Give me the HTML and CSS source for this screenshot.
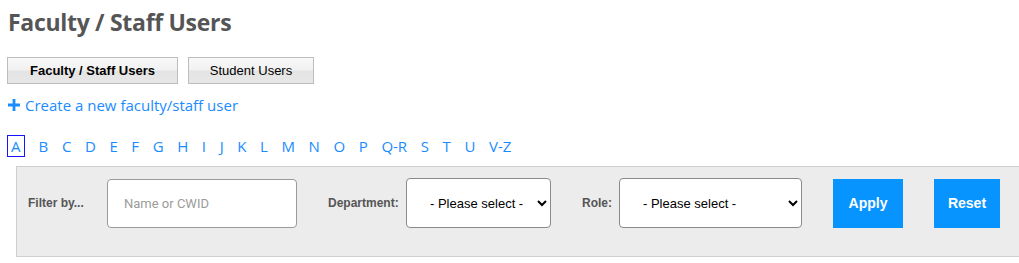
FILE: index.html
```html
<!DOCTYPE html>
<html lang="en">
<head>
<meta charset="utf-8">
<title>Faculty / Staff Users</title>
<link rel="stylesheet" href="styles.css">
</head>
<body>
<div class="page">
  <h1 class="title">Faculty / Staff Users</h1>
  <div class="tabs">
    <button class="tab tab-active" type="button">Faculty / Staff Users</button>
    <button class="tab" type="button">Student Users</button>
  </div>
  <a class="create-link" href="#"><svg class="plus" viewBox="0 0 12 12" width="12" height="12" aria-hidden="true"><path d="M4.6 0h2.8v4.6H12v2.8H7.4V12H4.6V7.4H0V4.6h4.6z" fill="#1a8cff"/></svg>Create a new faculty/staff user</a>
  <nav class="letters">
    <a class="letter letter-active" href="#">A</a>
    <a class="letter" href="#">B</a>
    <a class="letter" href="#">C</a>
    <a class="letter" href="#">D</a>
    <a class="letter" href="#">E</a>
    <a class="letter" href="#">F</a>
    <a class="letter" href="#">G</a>
    <a class="letter" href="#">H</a>
    <a class="letter" href="#">I</a>
    <a class="letter" href="#">J</a>
    <a class="letter" href="#">K</a>
    <a class="letter" href="#">L</a>
    <a class="letter" href="#">M</a>
    <a class="letter" href="#">N</a>
    <a class="letter" href="#">O</a>
    <a class="letter" href="#">P</a>
    <a class="letter" href="#">Q-R</a>
    <a class="letter" href="#">S</a>
    <a class="letter" href="#">T</a>
    <a class="letter" href="#">U</a>
    <a class="letter" href="#">V-Z</a>
  </nav>
  <form class="filter">
    <label class="flabel flabel-filter">Filter by...</label>
    <input class="finput" type="text" placeholder="Name or CWID">
    <label class="flabel flabel-dept">Department:</label>
    <select class="fselect fselect-dept"><option>- Please select -</option></select>
    <label class="flabel flabel-role">Role:</label>
    <select class="fselect fselect-role"><option>- Please select -</option></select>
    <button class="fbtn fbtn-apply" type="button">Apply</button>
    <button class="fbtn fbtn-reset" type="button">Reset</button>
  </form>
</div>
</body>
</html>
```

FILE: styles.css
```css
html, body {
  margin: 0;
  padding: 0;
  background: #fff;
  overflow: hidden;
}

.page {
  padding: 7px 0 0 8px;
  font-family: "Open Sans", "Liberation Sans", sans-serif;
}

.title {
  margin: 0;
  font-size: 23px;
  line-height: 30px;
  font-weight: 700;
  color: #555;
  letter-spacing: -0.3px;
}

.tabs {
  display: flex;
  gap: 10px;
  margin: 20px 0 0 -1px;
}

.tab {
  height: 27px;
  padding: 0;
  border: 1px solid #bdbdbd;
  background: linear-gradient(to bottom, #f8f8f8 0%, #f1f1f1 48%, #e4e4e4 52%, #e7e7e7 100%);
  font-family: "Liberation Sans", Arial, sans-serif;
  font-size: 13px;
  color: #000;
  cursor: pointer;
  width: 126px;
}

.tab-active {
  font-weight: 700;
  width: 171px;
}

.create-link {
  display: flex;
  align-items: center;
  margin-top: 11px;
  height: 20px;
  line-height: 20px;
  font-size: 15px;
  color: #1a8cff;
  text-decoration: none;
}

.plus {
  margin-right: 5px;
  margin-top: -1px;
}

.letters {
  display: flex;
  gap: 11.6px;
  margin-top: 20px;
}

.letter {
  font-size: 15px;
  line-height: 20px;
  color: #1a8cff;
  text-decoration: none;
  border: 1px solid transparent;
}

.letter-active {
  border-color: #1414ff;
  padding: 0 3px;
  margin-left: -1px;
  margin-right: 1.5px;
}

.filter {
  display: flex;
  align-items: center;
  margin: 9px 0 0 8px;
  width: 1020px;
  padding: 11px 0 28px 11px;
  background: #ececec;
  border: 1px solid #cfcfcf;
  border-right: none;
  font-family: "Liberation Sans", Arial, sans-serif;
}

.flabel {
  font-size: 12px;
  font-weight: 700;
  color: #555;
}

.flabel-filter { width: 79px; }
.flabel-dept { width: 78px; }
.flabel-role { width: 37px; }

.finput {
  box-sizing: border-box;
  width: 190px;
  height: 49px;
  margin-right: 31px;
  padding: 0 16px;
  border: 1px solid #9a9a9a;
  border-radius: 4px;
  background: #fff;
  font-family: Roboto, "Liberation Sans", sans-serif;
  font-size: 13px;
}

.finput::placeholder {
  color: #9b9b9b;
}

.fselect {
  box-sizing: border-box;
  height: 50px;
  margin-right: 31px;
  padding: 0 0 0 19px;
  border: 1px solid #8a8a8a;
  border-radius: 4px;
  background-color: #fff;
  font-family: "Liberation Sans", Arial, sans-serif;
  font-size: 13px;
  color: #000;
}

.fselect-dept { width: 145px; }
.fselect-role { width: 183px; }

.fbtn {
  height: 49px;
  border: none;
  background: #0894ff;
  color: #fff;
  font-family: "Liberation Sans", Arial, sans-serif;
  font-weight: 700;
  font-size: 14px;
  padding: 0;
  cursor: pointer;
}

.fbtn-apply {
  width: 70px;
  margin-right: 31px;
}

.fbtn-reset {
  width: 66px;
}
```
